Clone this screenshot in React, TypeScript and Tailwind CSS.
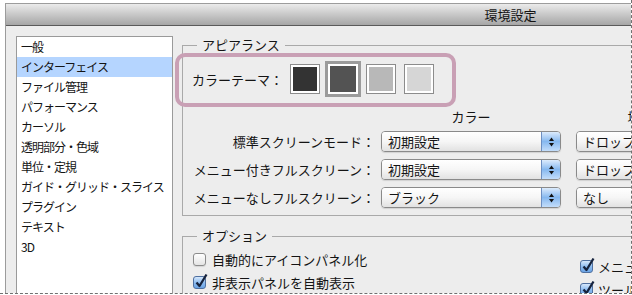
import React from 'react';

const listItems = [
  '一般',
  'インターフェイス',
  'ファイル管理',
  'パフォーマンス',
  'カーソル',
  '透明部分・色域',
  '単位・定規',
  'ガイド・グリッド・スライス',
  'プラグイン',
  'テキスト',
  '3D',
];

const swatches = [
  { fill: 'bg-[#333333]', selected: false },
  { fill: 'bg-[#535353]', selected: true },
  { fill: 'bg-[#b8b8b8]', selected: false },
  { fill: 'bg-[#d6d6d6]', selected: false },
];

const modeRows = [
  { label: '標準スクリーンモード：', color: '初期設定', border: 'ドロップシャドウ' },
  { label: 'メニュー付きフルスクリーン：', color: '初期設定', border: 'ドロップシャドウ' },
  { label: 'メニューなしフルスクリーン：', color: 'ブラック', border: 'なし' },
];

const Select: React.FC<{ value: string; width: string }> = ({ value, width }) => (
  <div className={`flex h-[21px] ${width} shrink-0 overflow-hidden rounded-[4px] border border-[#8a8a8a] shadow-[0_1px_1px_rgba(0,0,0,0.12)]`}>
    <div className="flex flex-1 items-center bg-gradient-to-b from-white via-[#f6f6f6] to-[#e2e2e2] pl-[6px] text-[13px] leading-none">
      {value}
    </div>
    <div className="flex w-[19px] items-center justify-center border-l border-[#6d8fc2] bg-gradient-to-b from-[#dcebfc] via-[#86b8ef] to-[#c3ddfa]">
      <svg width="7" height="12" viewBox="0 0 7 12">
        <path d="M3.5 1.5 L6 5 L1 5 Z" fill="#111" />
        <path d="M1 7 L6 7 L3.5 10.5 Z" fill="#111" />
      </svg>
    </div>
  </div>
);

const Checkbox: React.FC<{ checked?: boolean }> = ({ checked }) =>
  checked ? (
    <div className="relative h-[13px] w-[13px] shrink-0 rounded-[3px] border border-[#4f70a0] bg-gradient-to-b from-[#d6e8fc] via-[#8fbdf0] to-[#6aa3e4]">
      <svg className="absolute -top-[4px] left-[0px]" width="15" height="16" viewBox="0 0 15 16">
        <path d="M2.5 9.5 L5.5 13 L12.5 1.5" stroke="#16233d" strokeWidth="2.3" fill="none" strokeLinejoin="round" />
      </svg>
    </div>
  ) : (
    <div className="h-[13px] w-[13px] shrink-0 rounded-[3px] border border-[#8c8c8c] bg-gradient-to-b from-white to-[#e4e4e4] shadow-[0_1px_1px_rgba(0,0,0,0.1)]" />
  );

export default function App() {
  return (
    <div className="relative h-[295px] w-[632px] overflow-hidden bg-white font-['Noto_Sans_CJK_JP',sans-serif] text-[#141414]">
      <div className="h-[294px] w-[632px] overflow-hidden border-b border-r border-dashed border-[#707070]">
        <div className="ml-[5px] mt-[3px] flex h-[400px] w-[1010px] flex-col border-l border-t border-[#9c9c9c] bg-[#ededed]">
          <div className="flex h-[22px] items-center justify-center border-b border-[#5a5a5a] bg-gradient-to-b from-[#ebebeb] to-[#a6a6a6] text-[13px] leading-none">
            環境設定
          </div>

          <div className="flex pl-[10px] pt-[10px]">
            {/* category list */}
            <div className="h-[300px] w-[157px] shrink-0 border border-[#9a9a9a] bg-white">
              {listItems.map((item) => (
                <div
                  key={item}
                  className={`flex h-[20px] items-center pl-[4px] text-[12px] tracking-[-1px] leading-none ${
                    item === 'インターフェイス' ? 'bg-[#b5d5ff]' : ''
                  }`}
                >
                  {item}
                </div>
              ))}
            </div>

            <div className="ml-[9px] flex flex-col">
              {/* appearance */}
              <fieldset className="w-[700px] border border-[#a9a9a9] pb-[7px]">
                <legend className="ml-[14px] px-[5px] text-[13px] leading-[18px]">アピアランス</legend>

                <div className="mt-[7px] flex h-[36px] items-center">
                  <div className="w-[103px] pl-[9px] text-[13px] leading-none">カラーテーマ：</div>
                  {swatches.map((s, i) =>
                    s.selected ? (
                      <div key={i} className="flex w-[38px] justify-center">
                        <div className="border-[3px] border-[#9b9b9b]">
                          <div className={`h-[30px] w-[30px] border-2 border-white ${s.fill}`} />
                        </div>
                      </div>
                    ) : (
                      <div key={i} className="flex w-[38px] justify-center">
                        <div className="border border-[#8c8c8c]">
                          <div className={`h-[28px] w-[28px] border-2 border-white ${s.fill}`} />
                        </div>
                      </div>
                    )
                  )}
                </div>

                <div className="mt-[10px] flex h-[18px] items-center text-[13px] leading-none">
                  <div className="w-[198px]" />
                  <div className="w-[180px] text-center">カラー</div>
                  <div className="ml-[15px] w-[142px] text-center">境界線</div>
                </div>

                <div className="mt-[6px] flex flex-col gap-[7px]">
                  {modeRows.map((row) => (
                    <div key={row.label} className="flex items-center">
                      <div className="w-[192px] whitespace-nowrap text-right text-[13px] leading-none">{row.label}</div>
                      <div className="ml-[6px]">
                        <Select value={row.color} width="w-[180px]" />
                      </div>
                      <div className="ml-[15px]">
                        <Select value={row.border} width="w-[160px]" />
                      </div>
                    </div>
                  ))}
                </div>
              </fieldset>

              {/* options */}
              <fieldset className="mt-[11px] h-[120px] w-[700px] border border-[#a9a9a9]">
                <legend className="ml-[14px] px-[5px] text-[13px] leading-[18px]">オプション</legend>
                <div className="flex">
                  <div className="mt-[5px] flex w-[397px] flex-col gap-[5px] pl-[10px]">
                    <div className="flex h-[18px] items-center gap-[6px] text-[13px] leading-none">
                      <Checkbox />
                      <span>自動的にアイコンパネル化</span>
                    </div>
                    <div className="flex h-[18px] items-center gap-[6px] text-[13px] leading-none">
                      <Checkbox checked />
                      <span>非表示パネルを自動表示</span>
                    </div>
                  </div>
                  <div className="mt-[12px] flex flex-col gap-[5px]">
                    <div className="flex h-[18px] items-center gap-[5px] text-[13px] leading-none whitespace-nowrap">
                      <Checkbox checked />
                      <span>メニューカラーを表示</span>
                    </div>
                    <div className="flex h-[18px] items-center gap-[5px] text-[13px] leading-none whitespace-nowrap">
                      <Checkbox checked />
                      <span>ツールヒントを表示</span>
                    </div>
                  </div>
                </div>
              </fieldset>
            </div>
          </div>
        </div>
      </div>

      {/* annotation highlight */}
      <div className="absolute left-[175px] top-[53px] h-[54px] w-[281px] rounded-[10px] border-[4px] border-[#c9a0b5]" />
    </div>
  );
}
